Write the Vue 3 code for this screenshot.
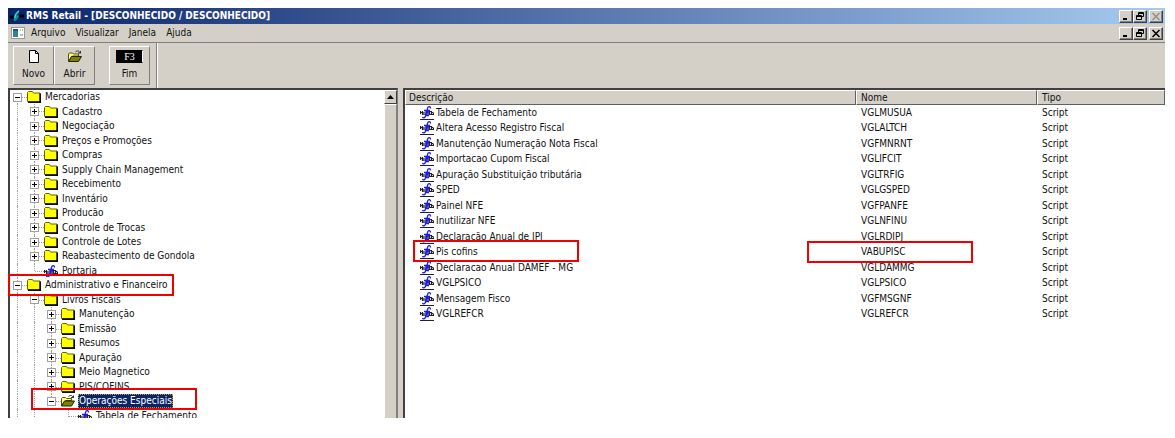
<template>
  <div class="desktop">
    <div class="window">
      <header class="title_bar">
        <svg class="app_icon" width="14" height="14" viewBox="0 0 14 14">
          <path d="M0 8h4M9 7h5" stroke="#000" stroke-width="3" />
          <path d="M4 12C3 8 5 3 9 1c1 2-1 4-2 5l2 1c-1 3-3 5-5 5z" fill="#0a8f9c" />
          <path d="M5 9c0-3 1-5 4-7" stroke="#5fe0e0" fill="none" />
        </svg>
        <h1>RMS Retail - [DESCONHECIDO / DESCONHECIDO]</h1>
        <div class="win_buttons">
          <button v-for="b in winButtons" :key="b.name" :aria-label="b.name" :class="[b.name, 'win_btn']" :disabled="b.name === 'close'">
            <svg width="10" height="9" viewBox="0 0 10 9"><path :d="b.path" /></svg>
          </button>
        </div>
      </header>

      <nav class="menu_bar">
        <svg class="doc_icon" width="14" height="12" viewBox="0 0 14 12">
          <rect x="0.5" y="0.5" width="13" height="11" fill="#fff" stroke="#9a9a9a" />
          <rect x="2" y="2" width="5" height="8" fill="#2f8292" />
          <path d="M2 3h5" stroke="#2452a0" stroke-width="2" />
          <path d="M9 3h1M11 3h1M9 8h3" stroke="#777" />
        </svg>
        <button v-for="m in menus" :key="m" class="menu_item">{{ m }}</button>
        <div class="win_buttons">
          <button v-for="b in winButtons" :key="b.name" :aria-label="b.name + ' document'" :class="[b.name, 'win_btn']">
            <svg width="10" height="9" viewBox="0 0 10 9"><path :d="b.path" /></svg>
          </button>
        </div>
      </nav>

      <div class="tool_bar">
        <button class="tool">
          <svg width="14" height="13" viewBox="0 0 14 13">
            <path d="M2.5 0.5h6l3 3v9h-9z" fill="#fff" stroke="#000" />
            <path d="M8.5 0.5v3h3" fill="none" stroke="#000" />
          </svg>
          <span>Novo</span>
        </button>
        <button class="tool">
          <svg width="14" height="13" viewBox="0 0 14 12"><use href="#open_folder" /></svg>
          <span>Abrir</span>
        </button>
        <button class="tool fim">
          <kbd>F3</kbd>
          <span>Fim</span>
        </button>
      </div>

      <!-- shared icons -->
      <svg class="defs" width="0" height="0">
        <defs>
          <g id="folder">
            <path d="M0.5 10.5v-9l1-1h4l1 1.500h6.500v8.500z" fill="#ff0" stroke="#666600" />
            <path d="M1 11.200h13" stroke="#000" stroke-width="1.500" fill="none" />
            <path d="M13.200 2.500v9" stroke="#000" stroke-width="1.500" fill="none" />
          </g>
          <g id="open_folder">
            <path d="M0.5 10.5v-7l1-1h3l1 1h5v2h-6z" fill="#ffff80" stroke="#555500" />
            <path d="M0.5 11l3-5h10l-3 5z" fill="#808000" stroke="#222200" />
            <path d="M7.5 1.5c2-2 4-1 4.500 1M10 2.500h3M12.500 0.500v2" fill="none" stroke="#333" />
          </g>
          <g id="script">
            <path d="M0 6.500h3M0.500 5v3M2.500 5v4M4 6v3M6 5v4M8 5.500v3.500M9.500 5.500h2v3h-2zM11.500 6.500h2M12 8.500h2M13.500 7v2" stroke="#222" stroke-width="1.200" fill="none" />
            <path d="M10.500 2.500C10.500 0 8 0 7.500 2.500L5.500 10c-0.500 2-2.500 2.500-3 1M4 4.500h6M9.500 4L5 9.500M5 9.500h4" stroke="#1c1cf4" stroke-width="1.300" fill="none" />
          </g>
        </defs>
      </svg>

      <main class="panes">
        <section class="tree_pane">
          <ul class="tree">
            <li v-for="(node, i) in tree" :key="i" class="node">
              <span v-for="(g, n) in node.guides" :key="n" class="cell" :class="{ line: g }"></span>
              <span class="cell branch" :class="node.line">
                <button v-if="node.sign" class="expander" :class="node.sign" :aria-label="node.sign + ' ' + node.text"></button>
              </span>
              <svg class="node_icon" width="14" height="12" viewBox="0 0 14 12"><use :href="'#' + (node.icon || 'folder')" /></svg>
              <span class="label" :class="{ selected: node.selected }">{{ node.text }}</span>
              <i v-if="node.mark" class="mark" :class="node.mark"></i>
            </li>
          </ul>
          <div class="scroll">
            <button class="scroll_up" aria-label="scroll up">
              <svg width="7" height="4" viewBox="0 0 7 4"><path d="M0 4L3.500 0 7 4z" /></svg>
            </button>
            <div class="thumb"></div>
          </div>
        </section>

        <section class="list_pane">
          <table>
            <colgroup>
              <col class="col_desc">
              <col class="col_name">
              <col>
            </colgroup>
            <thead>
              <tr><th>Descrição</th><th>Nome</th><th>Tipo</th></tr>
            </thead>
            <tbody>
              <tr v-for="row in scripts" :key="row[1]">
                <td>
                  <div class="desc">
                    <svg width="14" height="14" viewBox="0 0 14 14"><use href="#script" /><path d="M0 13.500h14" stroke="#222" /></svg>
                    <span>{{ row[0] }}</span>
                    <i v-if="row[2]" class="mark mark_desc"></i>
                  </div>
                </td>
                <td><div class="name">{{ row[1] }}<i v-if="row[2]" class="mark mark_name"></i></div></td>
                <td>Script</td>
              </tr>
            </tbody>
          </table>
        </section>
      </main>
    </div>
  </div>
</template>

<script setup>
import { ref } from 'vue';

const menus = ['Arquivo', 'Visualizar', 'Janela', 'Ajuda'];

const winButtons = [
  { name: 'minimize', path: 'M2 7.500h4M2 6.500h4' },
  { name: 'restore', path: 'M3.500 3V0.500h5v4H7M3 1.500h6M1.500 3.500h5v4h-5zM1 4.500h6' },
  { name: 'close', path: 'M1.500 1l7 7M8.500 1l-7 7' }
];

// guides: vertical lines of the parent levels
function child(text, extra = {}) {
  return { text, guides: [true], sign: 'plus', line: 'full', ...extra };
}

function grandchild(text, extra = {}) {
  return { text, guides: [true, true], sign: 'plus', line: 'full', ...extra };
}

const tree = ref([
  { text: 'Mercadorias', guides: [], sign: 'minus', line: 'lower' },
  child('Cadastro'),
  child('Negociação'),
  child('Preços e Promoções'),
  child('Compras'),
  child('Supply Chain Management'),
  child('Recebimento'),
  child('Inventário'),
  child('Producão'),
  child('Controle de Trocas'),
  child('Controle de Lotes'),
  child('Reabastecimento de Gondola'),
  child('Portaria', { sign: '', line: 'upper', icon: 'script' }),
  { text: 'Administrativo e Financeiro', guides: [], sign: 'minus', line: 'full', mark: 'mark_admin' },
  child('Livros Fiscais', { sign: 'minus' }),
  grandchild('Manutenção'),
  grandchild('Emissão'),
  grandchild('Resumos'),
  grandchild('Apuração'),
  grandchild('Meio Magnetico'),
  grandchild('PIS/COFINS'),
  grandchild('Operações Especiais', { sign: 'minus', line: 'upper', icon: 'open_folder', selected: true, mark: 'mark_oper' }),
  { text: 'Tabela de Fechamento', guides: [true, true, false], sign: '', line: 'full', icon: 'script' }
]);

const scripts = ref([
  ['Tabela de Fechamento', 'VGLMUSUA'],
  ['Altera Acesso Registro Fiscal', 'VGLALTCH'],
  ['Manutenção Numeração Nota Fiscal', 'VGFMNRNT'],
  ['Importacao Cupom Fiscal', 'VGLIFCIT'],
  ['Apuração Substituição tributária', 'VGLTRFIG'],
  ['SPED', 'VGLGSPED'],
  ['Painel NFE', 'VGFPANFE'],
  ['Inutilizar NFE', 'VGLNFINU'],
  ['Declaração Anual de IPI', 'VGLRDIPJ'],
  ['Pis cofins', 'VABUPISC', true],
  ['Declaracao Anual DAMEF - MG', 'VGLDAMMG'],
  ['VGLPSICO', 'VGLPSICO'],
  ['Mensagem Fisco', 'VGFMSGNF'],
  ['VGLREFCR', 'VGLREFCR']
]);
</script>

<style>
body {
  background: #fff;
}
</style>

<style scoped>
* {
  box-sizing: border-box;
}

.desktop {
  height: 100vh;
  padding: 8px 10px 20px 8px;
  font-family: Tahoma, "DejaVu Sans Condensed", "DejaVu Sans", sans-serif;
  font-size: 10px;
  line-height: 14px;
  color: #111;
}

.window {
  height: 100%;
  display: flex;
  flex-direction: column;
  overflow: hidden;
  background: #d4d0c8;
}

button {
  font: inherit;
  color: inherit;
  padding: 0;
  margin: 0;
  border: none;
  background: #d4d0c8;
}

svg {
  display: block;
  flex: none;
}

.defs {
  position: absolute;
}

.title_bar {
  height: 16px;
  flex: none;
  display: flex;
  align-items: center;
  padding: 0 2px;
  background: linear-gradient(to right, #0a246a, #a6caf0);
}

h1 {
  flex: 1;
  margin: 0 0 0 2px;
  font-size: 10px;
  line-height: 14px;
  color: #fff;
  white-space: nowrap;
}

.win_buttons {
  display: flex;
  margin-left: auto;
}

.win_btn {
  width: 14px;
  height: 13px;
  display: flex;
  align-items: center;
  justify-content: center;
  border: 1px solid;
  border-color: #fff #404040 #404040 #fff;
  box-shadow: inset -1px -1px #808080;
}

.win_btn path {
  fill: none;
  stroke: #000;
}

.win_btn.close {
  margin-left: 2px;
}

.win_btn.close path {
  stroke-width: 1.5;
}

.win_btn:disabled path {
  stroke: #909090;
}

.menu_bar {
  height: 19px;
  flex: none;
  display: flex;
  align-items: center;
  padding: 0 2px 0 3px;
  border-bottom: 1px solid #808080;
}

.menu_item {
  margin-right: 10px;
}

.doc_icon {
  margin-right: 6px;
}

.tool_bar {
  height: 45px;
  flex: none;
  display: flex;
  align-self: flex-start;
  padding: 3px 6px 3px 5px;
  border-right: 1px solid #808080;
  box-shadow: 1px 0 #fff;
}

.tool {
  width: 41px;
  display: flex;
  flex-direction: column;
  align-items: center;
  gap: 4px;
  padding-top: 3px;
  border: 1px solid;
  border-color: #fff #808080 #808080 #fff;
}

.fim {
  margin-left: 14px;
}

kbd {
  width: 27px;
  height: 13px;
  border: 1px solid #000;
  border-right-color: #fff;
  background: #000;
  color: #fff;
  font: 10px/11px "Liberation Serif", serif;
  text-align: center;
}

.panes {
  flex: 1;
  min-height: 0;
  display: flex;
  gap: 5px;
}

.tree_pane,
.list_pane {
  background: #fff;
  border-top: 2px solid #404040;
  border-left: 2px solid #404040;
}

.tree_pane {
  width: 390px;
  flex: none;
  display: flex;
  border-right: 1px solid #808080;
}

.list_pane {
  flex: 1;
  min-width: 0;
}

/* rows share the height evenly */
.tree {
  flex: 1;
  height: 333px;
  display: grid;
  grid-auto-rows: 1fr;
  list-style: none;
  margin: 0;
  padding: 0;
}

.node {
  position: relative;
  display: flex;
  align-items: center;
  min-height: 0;
  white-space: nowrap;
}

.cell {
  position: relative;
  width: 17px;
  height: 100%;
  flex: none;
  display: flex;
  align-items: center;
}

.line::before,
.branch::before {
  content: "";
  position: absolute;
  left: 7px;
  top: 0;
  bottom: 0;
  border-left: 1px dotted #a0a0a0;
}

.lower::before {
  top: 50%;
}

.upper::before {
  bottom: 50%;
}

.branch::after {
  content: "";
  position: absolute;
  left: 8px;
  right: 0;
  top: 7px;
  border-top: 1px dotted #a0a0a0;
}

.expander {
  position: relative;
  z-index: 1;
  width: 9px;
  height: 9px;
  margin-left: 3px;
  border: 1px solid #a0a0a0;
  background: linear-gradient(#000, #000) center / 5px 1px no-repeat #fff;
}

.expander.plus {
  background: linear-gradient(#000, #000) center / 5px 1px no-repeat, linear-gradient(#000, #000) center / 1px 5px no-repeat, #fff;
}

.label {
  margin-left: 3px;
  padding: 0 1px;
}

.selected {
  background: #0a246a;
  color: #fff;
  outline: 1px dotted #c0a030;
  outline-offset: -1px;
}

.scroll {
  width: 13px;
  display: flex;
  flex-direction: column;
  background: #d4d0c8;
}

.scroll_up,
.thumb {
  border: 1px solid;
  border-color: #fff #808080 #808080 #fff;
}

.scroll_up {
  height: 14px;
  display: flex;
  align-items: center;
  justify-content: center;
  border-color: #fff #404040 #404040 #fff;
}

.thumb {
  flex: 1;
  border-bottom: none;
}

table {
  width: 100%;
  height: 232px;
  table-layout: fixed;
  border-collapse: separate;
  border-spacing: 0;
}

.col_desc {
  width: 451px;
}

.col_name {
  width: 181px;
}

th {
  height: 15px;
  padding: 0 4px;
  text-align: left;
  font-weight: normal;
  line-height: 13px;
  background: #d4d0c8;
  border: 1px solid;
  border-color: #fff #606060 #606060 #fff;
}

th:first-child {
  padding-left: 3px;
}

td {
  padding: 0 5px;
  line-height: 14px;
  white-space: nowrap;
}

.desc {
  position: relative;
  display: flex;
  align-items: center;
  gap: 2px;
  height: 14px;
  padding-left: 10px;
}

.name {
  position: relative;
}

/* red highlight frames */
.mark {
  position: absolute;
  z-index: 2;
  width: 166px;
  height: 22px;
  border: 2px solid #f00000;
  pointer-events: none;
}

.mark_admin {
  left: -2px;
  top: -4px;
}

.mark_oper {
  left: 21px;
  top: -6px;
}

.mark_desc {
  left: 3px;
  top: -5px;
}

.mark_name {
  left: -54px;
  top: -4px;
}
</style>
